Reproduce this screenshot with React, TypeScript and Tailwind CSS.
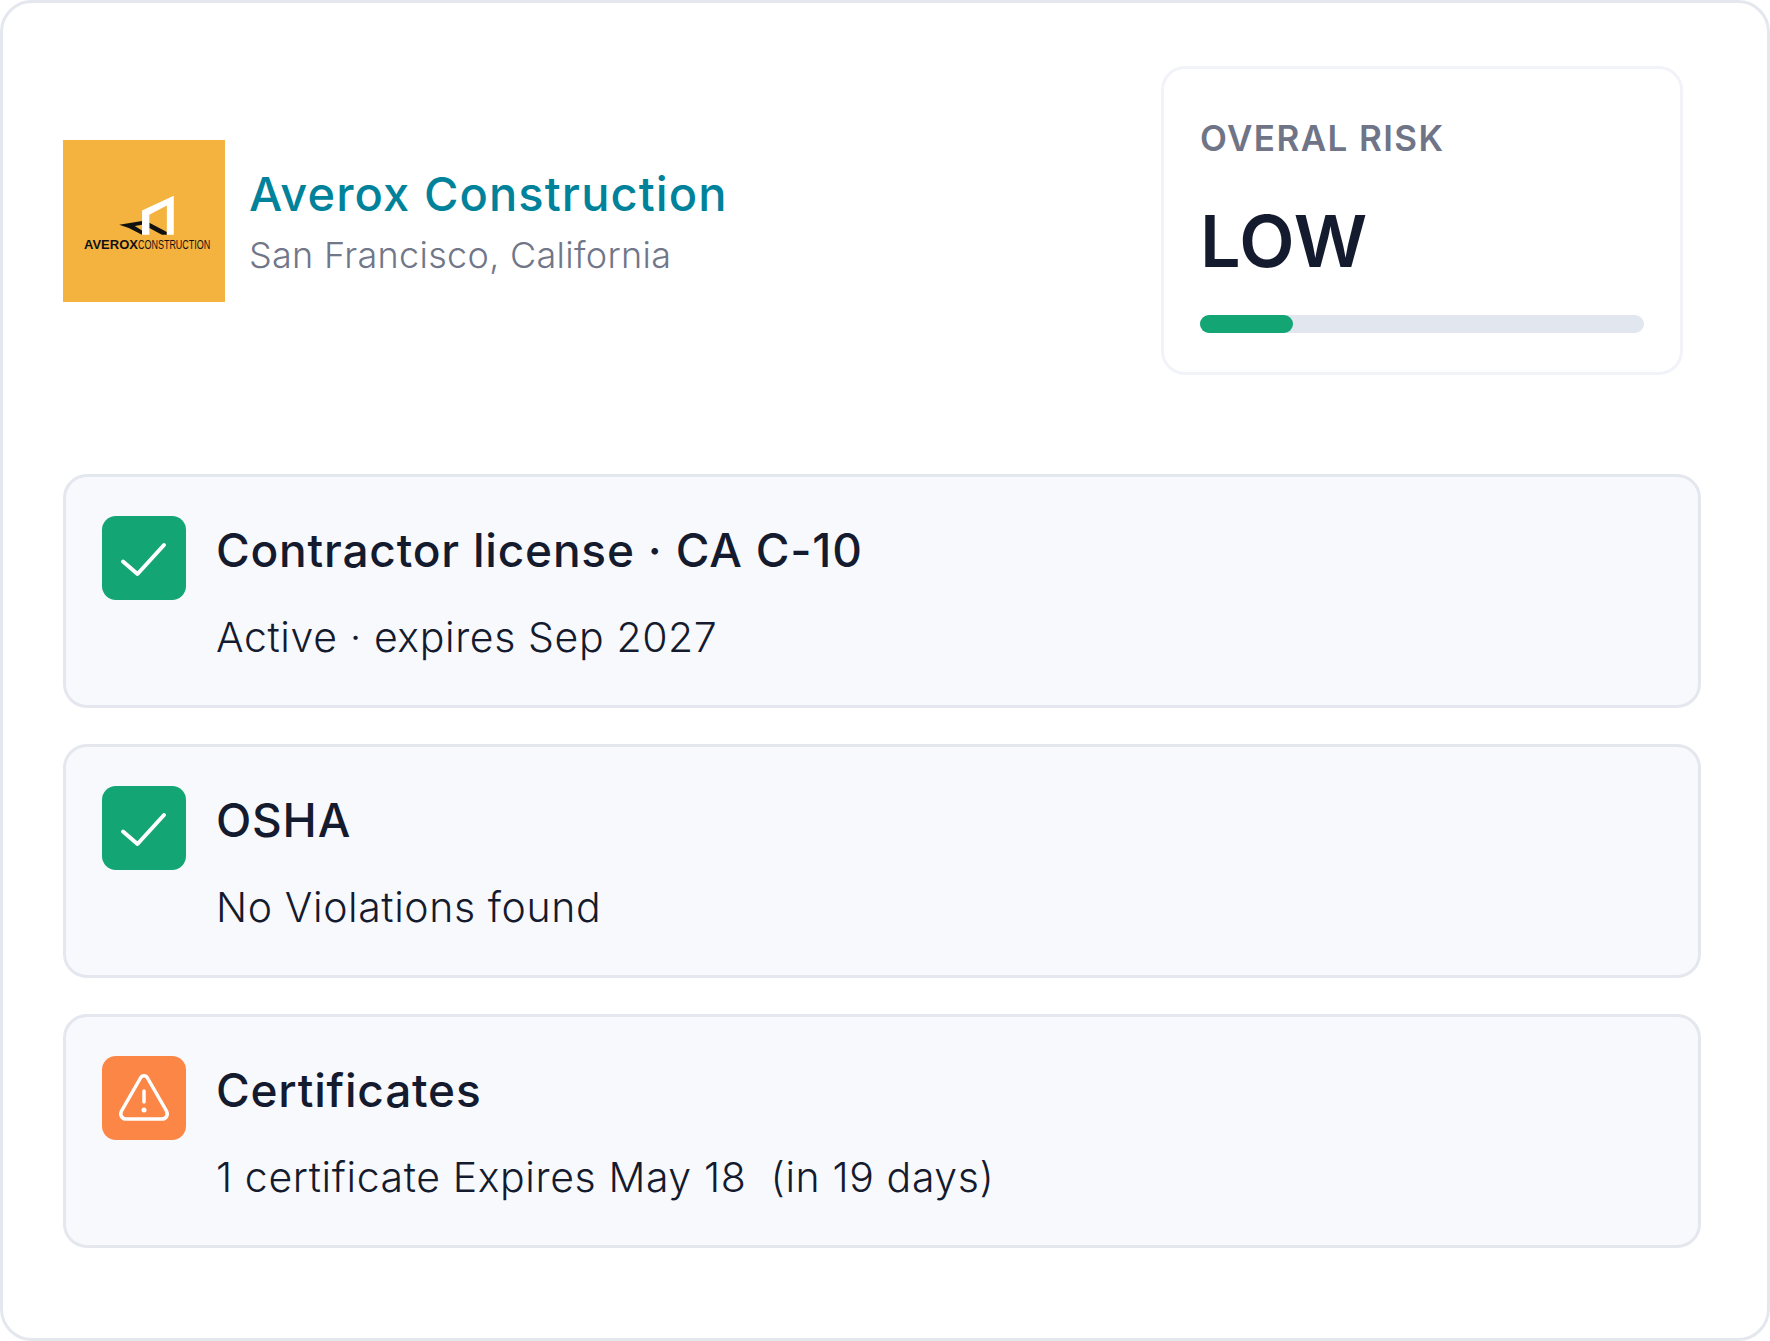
const cards = [
  { icon: 'check', title: 'Contractor license · CA C-10', text: 'Active · expires Sep 2027' },
  { icon: 'check', title: 'OSHA', text: 'No Violations found' },
  { icon: 'warn', title: 'Certificates', text: '1 certificate Expires May 18\u00a0 (in 19 days)' },
];

function CheckIcon() {
  return (
    <svg viewBox="0 0 84 84" className="h-[84px] w-[84px]" fill="none" stroke="white" strokeWidth="4" strokeLinecap="round" strokeLinejoin="round">
      <path d="M21 45.5 L35.5 58 L62 29" />
    </svg>
  );
}

function WarnIcon() {
  return (
    <svg viewBox="0 0 84 84" className="h-[84px] w-[84px]" fill="none" stroke="white" strokeWidth="3.5" strokeLinecap="round" strokeLinejoin="round">
      <path d="M38.5 22 L19.5 55 C17.5 59 20 63 24 63 L60 63 C64 63 66.5 59 64.5 55 L45.5 22 C43.8 19 40.2 19 38.5 22 Z" />
      <path d="M42 35 L42 46" />
      <path d="M42 54 L42 54.1" strokeWidth="5" />
    </svg>
  );
}

function Logo() {
  return (
    <div className="flex h-[162px] w-[162px] shrink-0 flex-col bg-[#f4b23f] pt-[54px] pl-[21px]">
      <svg viewBox="125 25 180 130" className="ml-[33px] h-[43px] w-[60px]">
        <path d="M131 118 L200 107 L200 118 L178 122 L200 135 L200 148 L160 128 Z" fill="#111" />
        <path d="M222 112 L275 140 L275 148 L260 148 L222 128 Z" fill="#111" />
        <path d="M200 75 L296 30 L296 148 L275 148 L275 60 L222 88 L222 148 L200 148 Z" fill="#fff" />
      </svg>
      <div className="mt-[1px] flex font-['Liberation_Sans',sans-serif] text-[13px] leading-[14px] whitespace-nowrap text-[#111]">
        <span className="font-bold">AVEROX</span>
        <span className="w-[72px] origin-left scale-x-[0.69]">CONSTRUCTION</span>
      </div>
    </div>
  );
}

export default function App() {
  return (
    <div className="h-[1341px] w-[1770px] overflow-hidden rounded-[32px] border-[3px] border-[#e5e7ef] bg-white pt-[64px] pr-[66px] pl-[60px] font-['Inter',sans-serif]">
      {/* Header */}
      <div className="flex h-[307px] items-center justify-between pr-[18px]">
        <div className="flex items-center gap-[24px]">
          <Logo />
          <div>
            <div className="text-[47px] leading-[58px] font-medium tracking-[1.1px] text-[#00829b]">Averox Construction</div>
            <div className="mt-[10px] text-[36px] leading-[44px] font-light tracking-[0.3px] text-[#717689]">San Francisco, California</div>
          </div>
        </div>
        <div className="h-[309px] w-[522px] shrink-0 rounded-[24px] border-[3px] border-[#f1f3f8] pt-[47px] pl-[36px]">
          <div className="text-[35px] leading-[44px] font-semibold tracking-[1.4px] text-[#6f7487]">OVERAL RISK</div>
          <div className="mt-[38px] text-[72px] leading-[86px] font-semibold tracking-[0.5px] text-[#151b2e]">LOW</div>
          <div className="mt-[31px] h-[18px] w-[444px] rounded-full bg-[#e2e6ee]">
            <div className="h-[18px] w-[93px] rounded-full bg-[#14a574]" />
          </div>
        </div>
      </div>

      {/* Checks */}
      <div className="mt-[100px] flex flex-col gap-[36px]">
        {cards.map((card) => (
          <div key={card.title} className="flex h-[234px] gap-[30px] rounded-[24px] border-[3px] border-[#e5e7ef] bg-[#f8f9fd] px-[36px] pt-[39px]">
            <div className={`h-[84px] w-[84px] shrink-0 rounded-[14px] ${card.icon === 'check' ? 'bg-[#14a574]' : 'bg-[#fc8646]'}`}>
              {card.icon === 'check' ? <CheckIcon /> : <WarnIcon />}
            </div>
            <div>
              <div className="mt-[5px] text-[46px] leading-[58px] font-medium tracking-[0.8px] text-[#151b2e]">{card.title}</div>
              <div className="mt-[33px] text-[41px] leading-[50px] font-light tracking-[0.6px] text-[#151b2e]">{card.text}</div>
            </div>
          </div>
        ))}
      </div>
    </div>
  );
}
